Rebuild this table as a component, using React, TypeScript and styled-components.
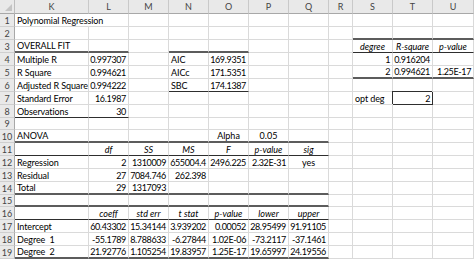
import { FC } from 'react';
import styled, { createGlobalStyle, css } from 'styled-components';

type Edge = 'thick' | 'thin';
type Spec = {
  t?: string;
  a?: 'l' | 'r' | 'c';
  i?: boolean;
  b?: Edge;
  box?: boolean;
  span?: number;
};

const COLS = ['K', 'L', 'M', 'N', 'O', 'P', 'Q', 'R', 'S', 'T', 'U'];
const WIDTHS = [74, 40, 40, 40, 40, 40, 40, 24, 40, 40, 41];
const HEIGHTS = [13, 13, 13, 13, 13, 13, 13, 13, 12, 13, 13, 13, 13, 13, 12, 13, 13, 13, 13];

// ---- sheet contents ----
const sheet: Spec[][] = HEIGHTS.map(() => COLS.map(() => ({})));
const put = (r: number, c: number, s: Spec) => {
  sheet[r - 1][c] = { ...sheet[r - 1][c], ...s };
};
const line = (r: number, from: number, to: number, b: Edge) => {
  for (let c = from; c <= to; c++) put(r, c, { b });
};
const nums = (r: number, c0: number, values: string[]) =>
  values.forEach((v, k) => v && put(r, c0 + k, { t: v, a: 'r' }));
const heads = (r: number, c0: number, values: string[]) =>
  values.forEach((v, k) => put(r, c0 + k, { t: v, a: 'c', i: true }));

put(1, 0, { t: 'Polynomial Regression', span: 2 });

put(3, 0, { t: 'OVERALL FIT' });
line(3, 0, 1, 'thick');
line(3, 3, 4, 'thick');
[
  ['Multiple R', '0.997307'],
  ['R Square', '0.994621'],
  ['Adjusted R Square', '0.994222'],
  ['Standard Error', '16.1987'],
  ['Observations', '30'],
].forEach(([label, v], k) => {
  put(4 + k, 0, { t: label });
  nums(4 + k, 1, [v]);
});
line(8, 0, 1, 'thin');

[
  ['AIC', '169.9351'],
  ['AICc', '171.5351'],
  ['SBC', '174.1387'],
].forEach(([label, v], k) => {
  put(4 + k, 3, { t: label });
  nums(4 + k, 4, [v]);
});
line(6, 3, 4, 'thin');

line(2, 8, 10, 'thick');
heads(3, 8, ['degree', 'R-square', 'p-value']);
line(3, 8, 10, 'thin');
nums(4, 8, ['1', '0.916204']);
nums(5, 8, ['2', '0.994621', '1.25E-17']);
line(5, 8, 10, 'thick');
put(7, 8, { t: 'opt deg' });
put(7, 9, { t: '2', a: 'r', box: true });

put(10, 0, { t: 'ANOVA' });
put(10, 4, { t: 'Alpha', a: 'c' });
put(10, 5, { t: '0.05', a: 'c' });
line(10, 0, 6, 'thick');
heads(11, 1, ['df', 'SS', 'MS', 'F', 'p-value', 'sig']);
line(11, 0, 6, 'thin');
put(12, 0, { t: 'Regression' });
nums(12, 1, ['2', '1310009', '655004.4', '2496.225', '2.32E-31']);
put(12, 6, { t: 'yes', a: 'c' });
put(13, 0, { t: 'Residual' });
nums(13, 1, ['27', '7084.746', '262.398']);
put(14, 0, { t: 'Total' });
nums(14, 1, ['29', '1317093']);
line(14, 0, 6, 'thick');

line(15, 0, 6, 'thick');
heads(16, 1, ['coeff', 'std err', 't stat', 'p-value', 'lower', 'upper']);
line(16, 0, 6, 'thin');
[
  ['Intercept', '60.43302', '15.34144', '3.939202', '0.00052', '28.95499', '91.91105'],
  ['Degree  1', '-55.1789', '8.788633', '-6.27844', '1.02E-06', '-73.2117', '-37.1461'],
  ['Degree  2', '21.92776', '1.105254', '19.83957', '1.25E-17', '19.65997', '24.19556'],
].forEach(([label, ...vals], k) => {
  put(17 + k, 0, { t: label });
  nums(17 + k, 1, vals);
});
line(19, 0, 6, 'thick');

// ---- components ----
const GlobalStyle = createGlobalStyle`
  html, body {
    margin: 0;
    padding: 0;
    background: #ffffff;
  }
`;

const Sheet = styled.div`
  display: grid;
  grid-template-columns: 15px ${WIDTHS.map((w) => `${w}px`).join(' ')};
  grid-template-rows: 14px ${HEIGHTS.map((h) => `${h}px`).join(' ')};
  width: 474px;
  height: 259px;
  overflow: hidden;
  background: #ffffff;
  font-family: Lato, 'Liberation Sans', sans-serif;
  font-size: 9px;
  color: #000000;
`;

const Corner = styled.div`
  position: relative;
  background: #e9e9e9;
  border-right: 1px solid #bdbdbd;
  border-bottom: 1px solid #a8a8a8;

  &::after {
    content: '';
    position: absolute;
    right: 2px;
    bottom: 2px;
    border-left: 7px solid transparent;
    border-bottom: 7px solid #c4c4c4;
  }
`;

const ColHead = styled.div`
  display: flex;
  align-items: center;
  justify-content: center;
  background: #e9e9e9;
  color: #444444;
  border-right: 1px solid #c9c9c9;
  border-bottom: 1px solid #a8a8a8;
`;

const RowHead = styled.div`
  display: flex;
  align-items: center;
  justify-content: center;
  background: #e9e9e9;
  color: #444444;
  border-right: 1px solid #a8a8a8;
  border-bottom: 1px solid #cfcfcf;
`;

const edges = {
  thick: '2px solid #5c5c5c',
  thin: '1px solid #2e2e2e',
};

const Cell = styled.div<{
  $align: 'l' | 'r' | 'c';
  $italic: boolean;
  $edge?: Edge;
  $box: boolean;
  $span: number;
}>`
  display: flex;
  align-items: center;
  justify-content: ${(p) =>
    p.$align === 'r' ? 'flex-end' : p.$align === 'c' ? 'center' : 'flex-start'};
  grid-column: span ${(p) => p.$span};
  padding: 0 2px 0 2px;
  white-space: pre;
  overflow: visible;
  letter-spacing: ${(p) => (p.$align === 'r' ? '-0.35px' : p.$align === 'l' ? '-0.1px' : '0')};
  font-style: ${(p) => (p.$italic ? 'italic' : 'normal')};
  border-right: 1px solid #dadada;
  border-bottom: ${(p) => (p.$edge ? edges[p.$edge] : '1px solid #dadada')};
  ${(p) =>
    p.$box &&
    css`
      position: relative;
      z-index: 1;
      border-right-color: #2e2e2e;
      border-bottom-color: #2e2e2e;
      box-shadow: -1px -1px 0 0 #2e2e2e;
    `}
`;

export default function App() {
  return (
    <>
      <GlobalStyle />
      <Sheet>
        <Corner />
        {COLS.map((c) => (
          <ColHead key={c}>{c}</ColHead>
        ))}
        {sheet.map((row, r) => (
          <SheetRow key={r} index={r + 1} cells={row} />
        ))}
      </Sheet>
    </>
  );
}

const SheetRow: FC<{ index: number; cells: Spec[] }> = ({ index, cells }) => {
  const out = [<RowHead key="h">{index}</RowHead>];
  let skip = 0;
  cells.forEach((s, c) => {
    if (skip > 0) {
      skip--;
      return;
    }
    const span = s.span ?? 1;
    skip = span - 1;
    out.push(
      <Cell
        key={c}
        $align={s.a ?? 'l'}
        $italic={!!s.i}
        $edge={s.b}
        $box={!!s.box}
        $span={span}
      >
        {s.t}
      </Cell>
    );
  });
  return <>{out}</>;
};
